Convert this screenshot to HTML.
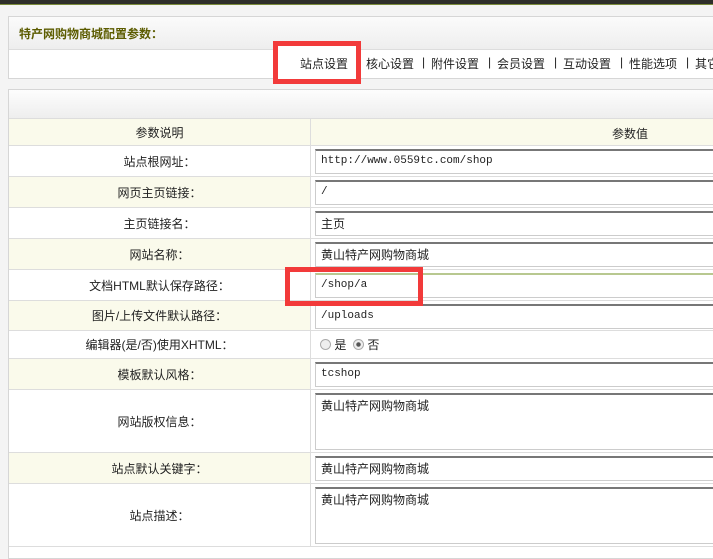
<!DOCTYPE html>
<html><head><meta charset="utf-8"><style>
*{margin:0;padding:0;box-sizing:border-box}
body{width:713px;height:550px;overflow:hidden;background:#f4f4f4;font:12px "Liberation Sans","Noto Sans CJK SC",sans-serif;color:#222;position:relative}
.top{position:absolute;left:0;top:0;width:713px;height:5px;background:#2e2e2a;border-bottom:1px solid #7a8a3a}
.p1{position:absolute;left:8px;top:16px;width:720px;height:63px;border:1px solid #d6d6d6;background:#fff}
.p1 .h{height:33px;background:linear-gradient(#fbfbfb,#eeeeee);border-bottom:1px solid #ddd;padding:8px 0 0 10px;font-weight:bold;color:#5c5c00;font-size:12px}
.n{position:absolute;top:55px;white-space:nowrap;font-size:12px}
.p2{position:absolute;left:8px;top:89px;width:720px;height:470px;border:1px solid #d6d6d6;background:#fff}
.p2 .h{height:29px;background:linear-gradient(#fdfdfd,#eeeeee);border-bottom:1px solid #ddd}
.row{position:absolute;left:0;width:720px;border-bottom:1px solid #ddd}
.l{position:absolute;left:0;top:0;bottom:0;width:302px;border-right:1px solid #ddd;text-align:center;display:flex;align-items:center;justify-content:center}
.cream .l{background:#fafaeb}
.in{position:absolute;left:306px;width:420px;border:1px solid #ccc;border-top:2px solid #777;background:#fff;font:11px "Liberation Mono","Noto Sans CJK SC",monospace;padding:4px 5px}
.red{position:absolute;border:5px solid #f23a3a}
</style></head><body>
<div class="top"></div>
<div class="p1"><div class="h">特产网购物商城配置参数：</div></div>
<div class="n" style="left:366px">核心设置</div>
<div class="n" style="left:422px">|</div>
<div class="n" style="left:431px">附件设置</div>
<div class="n" style="left:488px">|</div>
<div class="n" style="left:497px">会员设置</div>
<div class="n" style="left:554px">|</div>
<div class="n" style="left:563px">互动设置</div>
<div class="n" style="left:620px">|</div>
<div class="n" style="left:629px">性能选项</div>
<div class="n" style="left:686px">|</div>
<div class="n" style="left:695px">其它</div>
<div class="p2"><div class="h"></div>
<div class="row cream" style="top:29px;height:27px;background:#fafaeb"><div class="l">参数说明</div><div style="position:absolute;left:603px;top:6px">参数值</div></div>
<div class="row" style="top:56px;height:31px"><div class="l">站点根网址：</div><div class="in" style="top:3px;height:25px">http://www.0559tc.com/shop</div></div>
<div class="row cream" style="top:87px;height:31px"><div class="l">网页主页链接：</div><div class="in" style="top:3px;height:25px">/</div></div>
<div class="row" style="top:118px;height:31px"><div class="l">主页链接名：</div><div class="in" style="top:3px;height:25px;font-family:'Noto Sans CJK SC',sans-serif;font-size:12px;padding-top:2px">主页</div></div>
<div class="row cream" style="top:149px;height:31px"><div class="l">网站名称：</div><div class="in" style="top:3px;height:25px;font-family:'Noto Sans CJK SC',sans-serif;font-size:12px;padding-top:2px">黄山特产网购物商城</div></div>
<div class="row" style="top:180px;height:31px"><div class="l">文档HTML默认保存路径：</div><div class="in" style="top:3px;height:25px;border-top-color:#b8c890">/shop/a</div></div>
<div class="row cream" style="top:211px;height:30px"><div class="l">图片/上传文件默认路径：</div><div class="in" style="top:3px;height:25px">/uploads</div></div>
<div class="row" style="top:241px;height:28px"><div class="l">编辑器(是/否)使用XHTML：</div><div style="position:absolute;left:311px;top:5px"><span style="display:inline-block;width:11px;height:11px;border:1px solid #aaa;border-radius:50%;background:#eee;vertical-align:-1px"></span> 是 &nbsp;<span style="display:inline-block;width:11px;height:11px;border:1px solid #aaa;border-radius:50%;background:radial-gradient(#555 30%,#eee 40%);vertical-align:-1px"></span> 否</div></div>
<div class="row cream" style="top:269px;height:31px"><div class="l">模板默认风格：</div><div class="in" style="top:3px;height:25px">tcshop</div></div>
<div class="row" style="top:300px;height:63px"><div class="l">网站版权信息：</div><div class="in" style="top:3px;height:57px;font-family:'Noto Sans CJK SC',sans-serif;font-size:12px;padding-top:2px">黄山特产网购物商城</div></div>
<div class="row cream" style="top:363px;height:31px"><div class="l">站点默认关键字：</div><div class="in" style="top:3px;height:25px;font-family:'Noto Sans CJK SC',sans-serif;font-size:12px;padding-top:2px">黄山特产网购物商城</div></div>
<div class="row" style="top:394px;height:63px"><div class="l">站点描述：</div><div class="in" style="top:3px;height:57px;font-family:'Noto Sans CJK SC',sans-serif;font-size:12px;padding-top:2px">黄山特产网购物商城</div></div>
</div>
<div class="red" style="left:273px;top:41px;width:88px;height:43px;background:#fff"></div>
<div style="position:absolute;left:300px;top:55px">站点设置</div>
<div class="red" style="left:285px;top:267px;width:138px;height:39px"></div>
</body></html>
